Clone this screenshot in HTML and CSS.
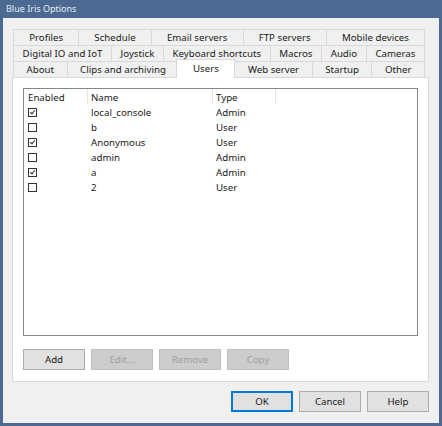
FILE: index.html
```html
<!DOCTYPE html>
<html lang="en">
<head>
    <meta charset="UTF-8">
    <title>Blue Iris Options</title>
    <link rel="stylesheet" href="styles.css">
</head>
<body>
    <div class="dialog">
        <div class="titlebar">Blue Iris Options</div>

        <div class="tabs">
            <div class="tab-row">
                <div class="tab">Profiles</div>
                <div class="tab">Schedule</div>
                <div class="tab">Email servers</div>
                <div class="tab">FTP servers</div>
                <div class="tab">Mobile devices</div>
            </div>
            <div class="tab-row">
                <div class="tab">Digital IO and IoT</div>
                <div class="tab">Joystick</div>
                <div class="tab">Keyboard shortcuts</div>
                <div class="tab">Macros</div>
                <div class="tab">Audio</div>
                <div class="tab">Cameras</div>
            </div>
            <div class="tab-row">
                <div class="tab">About</div>
                <div class="tab">Clips and archiving</div>
                <div class="tab selected">Users</div>
                <div class="tab">Web server</div>
                <div class="tab">Startup</div>
                <div class="tab">Other</div>
            </div>
        </div>

        <div class="page">
            <div class="listview">
                <div class="lv-row lv-header">
                    <div class="col col-enabled">Enabled</div>
                    <div class="col col-name">Name</div>
                    <div class="col col-type">Type</div>
                    <div class="col col-rest"></div>
                </div>
                <div class="lv-row">
                    <div class="col col-enabled"><span class="check on"></span></div>
                    <div class="col col-name">local_console</div>
                    <div class="col col-type">Admin</div>
                </div>
                <div class="lv-row">
                    <div class="col col-enabled"><span class="check"></span></div>
                    <div class="col col-name">b</div>
                    <div class="col col-type">User</div>
                </div>
                <div class="lv-row">
                    <div class="col col-enabled"><span class="check on"></span></div>
                    <div class="col col-name">Anonymous</div>
                    <div class="col col-type">User</div>
                </div>
                <div class="lv-row">
                    <div class="col col-enabled"><span class="check"></span></div>
                    <div class="col col-name">admin</div>
                    <div class="col col-type">Admin</div>
                </div>
                <div class="lv-row">
                    <div class="col col-enabled"><span class="check on"></span></div>
                    <div class="col col-name">a</div>
                    <div class="col col-type">Admin</div>
                </div>
                <div class="lv-row">
                    <div class="col col-enabled"><span class="check"></span></div>
                    <div class="col col-name">2</div>
                    <div class="col col-type">User</div>
                </div>
            </div>

            <div class="page-buttons">
                <button class="btn">Add</button>
                <button class="btn" disabled>Edit...</button>
                <button class="btn" disabled>Remove</button>
                <button class="btn" disabled>Copy</button>
            </div>
        </div>

        <div class="dialog-buttons">
            <button class="btn default">OK</button>
            <button class="btn">Cancel</button>
            <button class="btn">Help</button>
        </div>
    </div>
</body>
</html>
```

FILE: styles.css
```css
/* General Styles */
body {
    margin: 0;
    font-family: 'Noto Sans', 'Open Sans', sans-serif;
    font-size: 9.7px;
    color: #1a1a1a;
    background: #fff;
}
.dialog {
    width: 442px;
    height: 426px;
    box-sizing: border-box;
    border: 3px solid #4b6991;
    border-top: 0;
    background: #f0f0f0;
    display: flex;
    flex-direction: column;
}
.titlebar {
    height: 18px;
    line-height: 18px;
    margin: 0 -3px;
    padding-left: 6px;
    background: #4b6991;
    color: #e6ecf4;
    font-size: 9px;
}

/* Tab Styles */
.tabs {
    margin: 11px 15px 0 10px;
    display: flex;
    flex-direction: column;
}
.tab-row {
    display: flex;
    height: 16px;
}
.tab {
    flex: 1 1 auto;
    padding: 0 6px;
    text-align: center;
    line-height: 15px;
    background: #f0f0f0;
    border: 1px solid #d9d9d9;
    border-bottom: 0;
    margin-right: -1px;
    white-space: nowrap;
}
.tab.selected {
    background: #fff;
    margin: -2px -1px -1px -2px;
    padding: 0 9px;
    line-height: 18px;
    position: relative;
    z-index: 1;
}

/* Page Styles */
.page {
    margin: 0 10px 0 9px;
    height: 305px;
    border: 1px solid #d9d9d9;
    background: #fff;
    padding: 10px 0 0 10px;
    box-sizing: border-box;
}
.listview {
    width: 395px;
    height: 248px;
    box-sizing: border-box;
    border: 1px solid #828790;
    background: #fff;
}
.lv-row {
    display: flex;
    height: 15px;
    line-height: 15px;
}
.lv-header {
    height: 16px;
    line-height: 17px;
}
.col {
    box-sizing: border-box;
    padding-left: 3px;
    white-space: nowrap;
}
.col-enabled {
    width: 64px;
    padding-left: 4px;
}
.col-name {
    width: 125px;
}
.col-type {
    width: 63px;
}
.lv-header .col {
    border-right: 1px solid #e5e5e5;
}
.lv-header .col-rest {
    border-right: 0;
}
.check {
    display: inline-block;
    width: 9px;
    height: 9px;
    box-sizing: border-box;
    border: 1px solid #333;
    vertical-align: -1px;
    position: relative;
}
.check.on::after {
    content: "";
    position: absolute;
    left: 2px;
    top: 0;
    width: 2px;
    height: 4px;
    border: solid #333;
    border-width: 0 1px 1px 0;
    transform: rotate(40deg);
}

/* Button Styles */
.btn {
    width: 62px;
    height: 21px;
    padding: 0;
    font-family: inherit;
    font-size: 9.7px;
    color: #1a1a1a;
    background: #e1e1e1;
    border: 1px solid #adadad;
}
.btn:disabled {
    color: #a0a0a0;
    background: #cccccc;
    border-color: #bfbfbf;
}
.btn.default {
    border: 1px solid #0078d7;
    box-shadow: inset 0 0 0 1px #0078d7;
}
.page-buttons {
    display: flex;
    gap: 6px;
    margin-top: 13px;
}
.dialog-buttons {
    display: flex;
    justify-content: flex-end;
    gap: 6px;
    margin: 9px 10px 0 0;
}
```
